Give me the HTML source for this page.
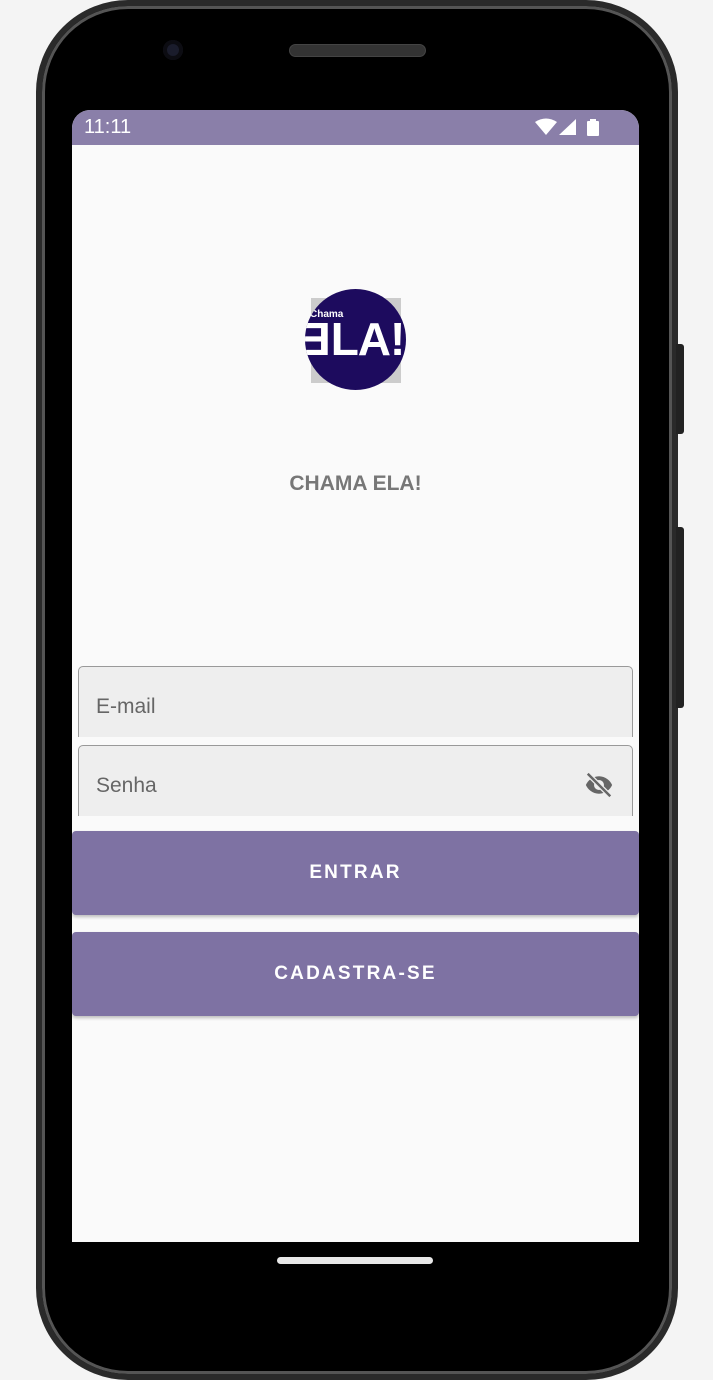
<!DOCTYPE html>
<html><head><meta charset="utf-8"><style>
*{margin:0;padding:0;box-sizing:border-box}
body{width:713px;height:1380px;background:#f4f4f4;position:relative;overflow:hidden;font-family:"Liberation Sans",sans-serif}
.phone{position:absolute;left:36px;top:0;width:642px;height:1380px;background:#000;border-radius:92px;border:6px solid #2a2a2a;box-shadow:inset 0 0 0 3px #555}
.btn1{position:absolute;left:676px;top:344px;width:8px;height:90px;background:#222;border-radius:0 3px 3px 0}
.btn2{position:absolute;left:676px;top:527px;width:8px;height:181px;background:#222;border-radius:0 3px 3px 0}
.cam{position:absolute;left:163px;top:40px;width:20px;height:20px;border-radius:50%;background:#1a1c2c;box-shadow:inset 0 0 0 4px #0c0c12}
.spk{position:absolute;left:289px;top:44px;width:137px;height:13px;border-radius:7px;background:#333;border:1px solid #444}
.screen{position:absolute;left:72px;top:110px;width:567px;height:1132px;background:#fafafa;border-radius:18px 18px 0 0;overflow:hidden}
.sb{height:35px;background:#8a7fa9;color:#fff;font-size:20px;padding:6px 0 0 12px;position:relative}
.home{position:absolute;left:277px;top:1257px;width:156px;height:7px;border-radius:4px;background:#e8e8e8}
.field{position:absolute;left:6px;width:555px;height:71px;background:#eee;border:1px solid #999;border-bottom:none;border-radius:5px 5px 0 0;font-size:21px;color:#666;padding:28px 0 0 17px}
.b{position:absolute;left:0;width:567px;height:84px;background:#7e72a3;border-radius:4px;color:#fff;font-weight:bold;font-size:19px;letter-spacing:2.2px;text-align:center;line-height:84px;box-shadow:0 2px 3px rgba(0,0,0,.25)}
</style></head><body>
<div class="phone"></div>
<div class="btn1"></div><div class="btn2"></div>
<div class="cam"></div><div class="spk"></div>
<div class="screen">
 <div class="sb">11:11
  <svg style="position:absolute;left:463px;top:8px" width="70" height="20" viewBox="0 0 70 20">
   <path d="M0 4 Q11 -3 22 4 L11 17Z" fill="#fff"/>
   <path d="M24 17 L41 1 L41 17Z" fill="#fff"/>
   <rect x="52" y="3" width="12" height="15" rx="1" fill="#fff"/><rect x="55" y="1" width="6" height="3" fill="#fff"/>
  </svg>
 </div>
 <div style="position:absolute;left:239px;top:188px;width:90px;height:85px;background:#ccc"></div>
 <div style="position:absolute;left:233px;top:179px;width:101px;height:101px;border-radius:50%;background:#1d0b5e;overflow:hidden">
  <div style="position:absolute;left:5px;top:20px;color:#fff;font-size:10px;font-weight:bold">Chama</div>
  <div style="position:absolute;left:-4px;top:28px;color:#fff;font-size:46px;font-weight:bold;letter-spacing:-1px;line-height:44px"><span style="display:inline-block;transform:scaleX(-1)">E</span>LA!</div>
 </div>
 <div style="position:absolute;left:0;width:567px;top:362px;text-align:center;color:#777;font-weight:bold;font-size:21px">CHAMA ELA!</div>
 <div class="field" style="top:556px">E-mail</div>
 <div class="field" style="top:635px">Senha
  <svg style="position:absolute;right:16px;top:24px" width="34" height="30" viewBox="0 0 24 24"><path d="M12 5C7 5 3 8.5 1.5 12 3 15.5 7 19 12 19s9-3.5 10.5-7C21 8.5 17 5 12 5zm0 11a4 4 0 110-8 4 4 0 010 8z" fill="#666"/><path d="M3 3L21 21" stroke="#eee" stroke-width="4"/><path d="M3 3L21 21" stroke="#666" stroke-width="2"/></svg>
 </div>
 <div class="b" style="top:721px">ENTRAR</div>
 <div class="b" style="top:822px">CADASTRA-SE</div>
</div>
<div class="home"></div>
</body></html>
